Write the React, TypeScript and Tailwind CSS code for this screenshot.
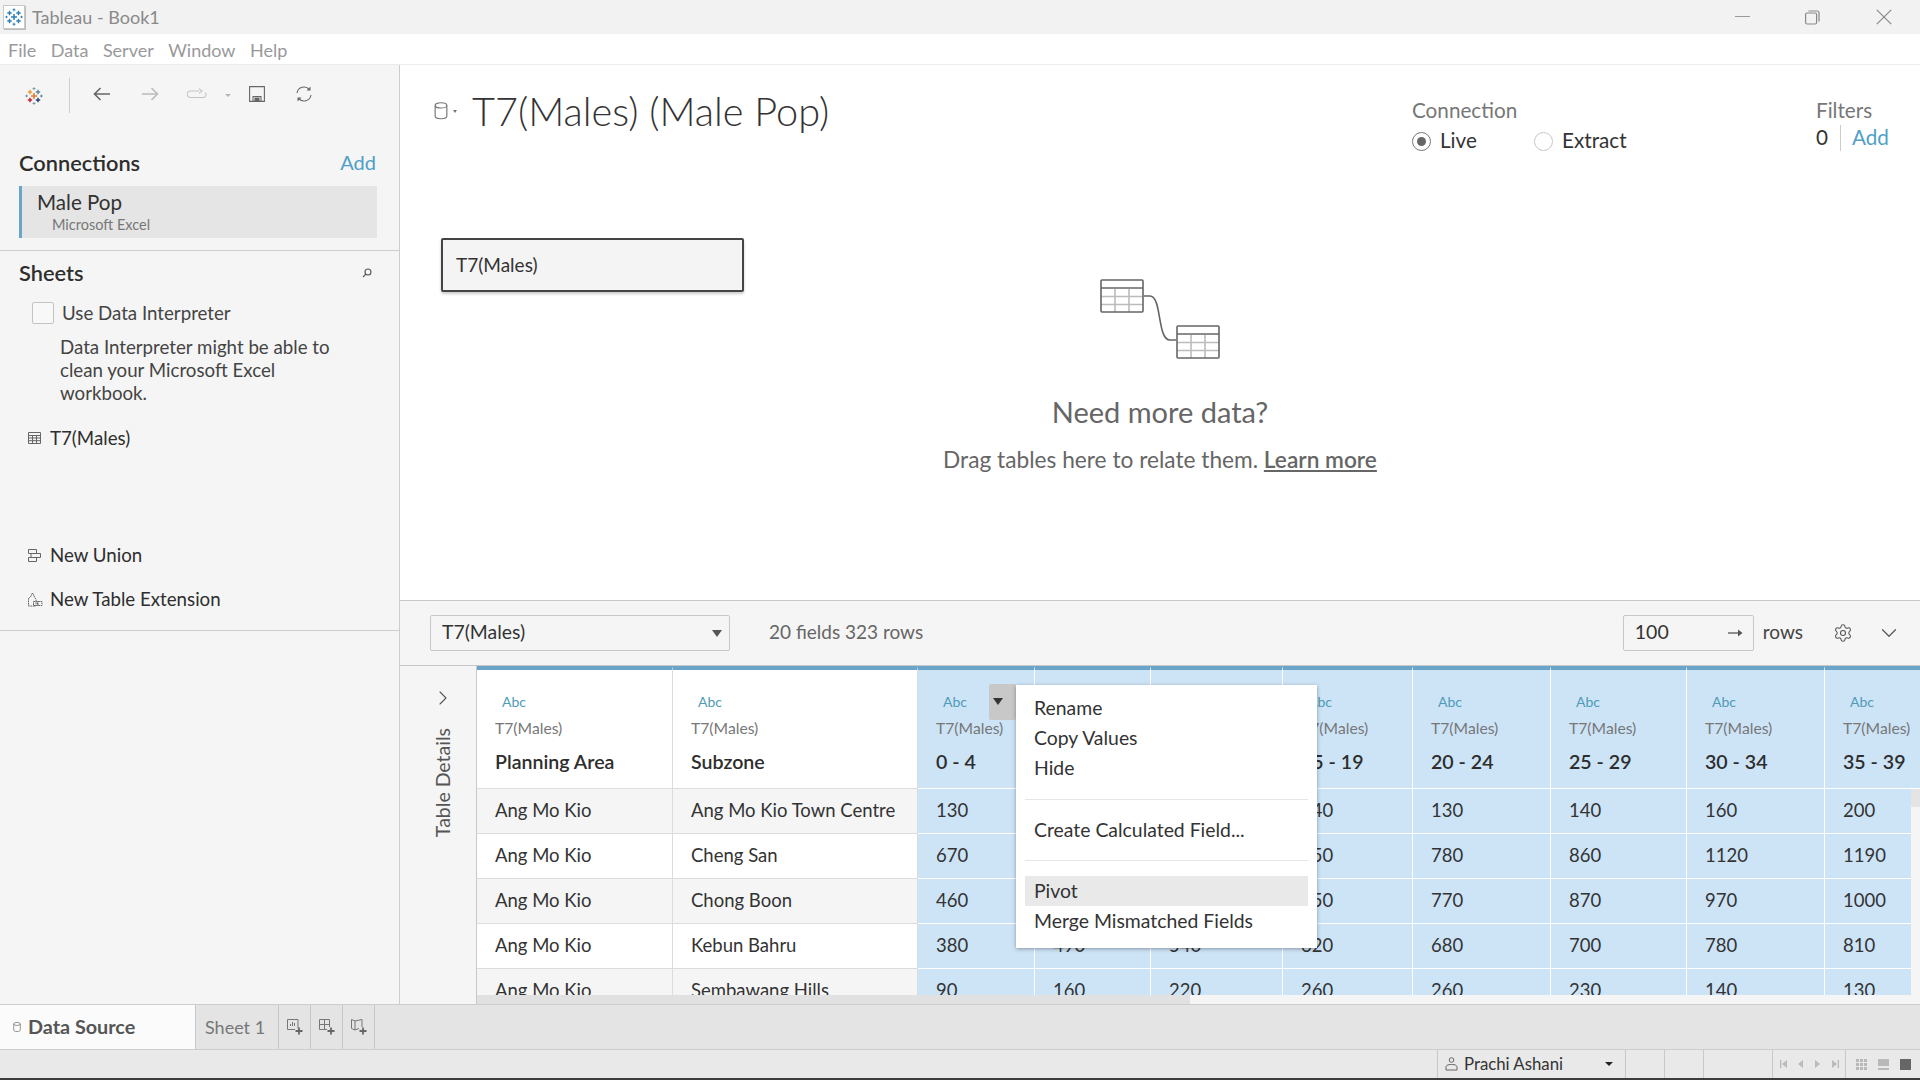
import { ChevronDown, ChevronRight, Settings } from "lucide-react";

const COLS = [
  { w: "w-[196px]", name: "Planning Area", values: ["Ang Mo Kio", "Ang Mo Kio", "Ang Mo Kio", "Ang Mo Kio", "Ang Mo Kio"] },
  { w: "w-[245px]", name: "Subzone", values: ["Ang Mo Kio Town Centre", "Cheng San", "Chong Boon", "Kebun Bahru", "Sembawang Hills"] },
  { w: "w-[117px]", name: "0 - 4", sel: true, menu: true, values: ["130", "670", "460", "380", "90"] },
  { w: "w-[116px]", name: "5 - 9", sel: true, values: ["140", "700", "480", "490", "160"] },
  { w: "w-[132px]", name: "10 - 14", sel: true, values: ["150", "790", "530", "540", "220"] },
  { w: "w-[130px]", name: "15 - 19", sel: true, values: ["140", "850", "650", "620", "260"] },
  { w: "w-[138px]", name: "20 - 24", sel: true, values: ["130", "780", "770", "680", "260"] },
  { w: "w-[136px]", name: "25 - 29", sel: true, values: ["140", "860", "870", "700", "230"] },
  { w: "w-[138px]", name: "30 - 34", sel: true, values: ["160", "1120", "970", "780", "140"] },
  { w: "w-[96px]", name: "35 - 39", sel: true, values: ["200", "1190", "1000", "810", "130"] },
];

function PlusMark({ x, y, r, color, w = 1.4 }: { x: number; y: number; r: number; color: string; w?: number }) {
  return <path d={`M${x - r} ${y}H${x + r}M${x} ${y - r}V${y + r}`} stroke={color} strokeWidth={w} fill="none" />;
}

function TableauLogo() {
  return (
    <svg width="18" height="18" viewBox="0 0 18 18">
      <PlusMark x={9} y={9} r={3} color="#e8762d" w={1.5} />
      <PlusMark x={5} y={5} r={2.2} color="#eb9c3c" />
      <PlusMark x={13} y={5} r={2.2} color="#5b879b" />
      <PlusMark x={5} y={13} r={2.2} color="#c72035" />
      <PlusMark x={13} y={13} r={2.2} color="#1f447c" />
      <PlusMark x={9} y={1.6} r={1.4} color="#7199a6" w={1} />
      <PlusMark x={1.6} y={9} r={1.4} color="#7199a6" w={1} />
      <PlusMark x={16.4} y={9} r={1.4} color="#59879b" w={1} />
      <PlusMark x={9} y={16.4} r={1.4} color="#7199a6" w={1} />
    </svg>
  );
}

function AppIcon() {
  return (
    <div className="flex h-[24px] w-[22px] items-center justify-center border border-[#c9c9c9] bg-white shadow-[1px_1px_0_#bbb]">
      <svg width="18" height="18" viewBox="0 0 18 18">
        <PlusMark x={9} y={9} r={3} color="#2f7fb5" w={1.5} />
        <PlusMark x={4.5} y={5} r={2.2} color="#2f7fb5" />
        <PlusMark x={13.5} y={5} r={2.2} color="#2f7fb5" />
        <PlusMark x={4.5} y={13} r={2.2} color="#2f7fb5" />
        <PlusMark x={13.5} y={13} r={2.2} color="#2f7fb5" />
        <PlusMark x={9} y={1.8} r={1.5} color="#2f7fb5" w={1} />
        <PlusMark x={9} y={16.2} r={1.5} color="#2f7fb5" w={1} />
        <PlusMark x={1.5} y={9} r={1.2} color="#2f7fb5" w={1} />
        <PlusMark x={16.5} y={9} r={1.2} color="#2f7fb5" w={1} />
      </svg>
    </div>
  );
}

function Cylinder({ size = 14, color = "#777" }: { size?: number; color?: string }) {
  return (
    <svg width={size} height={size * 1.25} viewBox="0 0 14 18" fill="none" stroke={color} strokeWidth="1.2">
      <ellipse cx="7" cy="3.5" rx="6" ry="2.7" />
      <path d="M1 3.5V14.5C1 16 3.7 17.2 7 17.2S13 16 13 14.5V3.5" />
    </svg>
  );
}

function MiniTable({ className }: { className?: string }) {
  return (
    <svg width="44" height="34" viewBox="0 0 44 34" fill="none" className={className}>
      <path d="M15 10V33M29 10V33M1 17.5H43M1 25.5H43" stroke="#bcbcbc" strokeWidth="1.6" />
      <rect x="1" y="1" width="42" height="32" rx="1" stroke="#666" strokeWidth="1.6" />
      <path d="M1 9H43" stroke="#666" strokeWidth="1.6" />
    </svg>
  );
}

function SheetList({ icon, label, className }: { icon: React.ReactNode; label: string; className: string }) {
  return (
    <div className={`flex h-[24px] items-center text-[18.7px] text-[#2e2e2e] ${className}`}>
      <span className="flex w-[22px] shrink-0 items-center">{icon}</span>
      <span>{label}</span>
    </div>
  );
}

function Sidebar() {
  return (
    <aside className="flex w-[400px] shrink-0 flex-col border-r border-[#cdcdcd] bg-[#f5f5f5]">
      <div className="mt-[13px] flex h-[35px] items-center">
        <div className="ml-[25px] w-[44px]">
          <TableauLogo />
        </div>
        <div className="h-full w-px bg-[#cfcfcf]" />
        <svg width="18" height="14" viewBox="0 0 18 14" fill="none" stroke="#666" strokeWidth="1.6" className="mb-[3px] ml-[23px]">
          <path d="M17 7H2M7.500 1 1.500 7l6 6" />
        </svg>
        <svg width="18" height="14" viewBox="0 0 18 14" fill="none" stroke="#bbb" strokeWidth="1.6" className="mb-[3px] ml-[30px]">
          <path d="M1 7h15M10.500 1l6 6-6 6" />
        </svg>
        <svg width="20" height="12" viewBox="0 0 20 12" fill="none" stroke="#c4c4c4" strokeWidth="1.1" className="mb-[4px] ml-[28px]">
          <path d="M12 3H3.500a3 3 0 0 0 0 6.500h13a2.600 2.600 0 0 0 1.500-4.700M12 .8 15 3l-3 2.400" />
        </svg>
        <div className="ml-[18px] h-0 w-0 border-x-[3px] border-t-[3px] border-x-transparent border-t-[#b5b5b5]" />
        <svg width="16" height="16" viewBox="0 0 16 16" fill="none" stroke="#666" strokeWidth="1.1" className="mb-[3px] ml-[18px]">
          <path d="M.6.6h14.800v14.800H.6z" />
          <path d="M4 15.400V10.500h8v4.900" />
          <path d="M6 12h4v3.400H6z" fill="#666" />
        </svg>
        <svg width="18" height="18" viewBox="0 0 18 18" fill="none" stroke="#666" strokeWidth="1.1" className="mb-[3px] ml-[30px]">
          <path d="M2 8a7 7 0 0 1 12.400-3.300M16 10a7 7 0 0 1-12.400 3.300" />
          <path d="M15.500 1.500v4h-4zM2.500 16.500v-4h4z" fill="#666" stroke="none" />
        </svg>
      </div>

      <div className="ml-[19px] mr-[23px] mt-[38px] flex h-[24px] items-center justify-between">
        <span className="text-[21.8px] font-semibold text-[#2e2e2e]">Connections</span>
        <span className="mb-[2px] text-[20px] text-[#4f9fc6]">Add</span>
      </div>
      <div className="ml-[19px] mr-[22px] mt-[11px] flex h-[52px] flex-col border-l-[3px] border-[#6aa5c9] bg-[#e5e5e5] pl-[15px] pt-[4px]">
        <span className="text-[20.6px] leading-[24px] text-[#333]">Male Pop</span>
        <span className="ml-[15px] mt-[2px] text-[14.5px] leading-[18px] text-[#777]">Microsoft Excel</span>
      </div>
      <div className="mt-[12px] h-px bg-[#cdcdcd]" />

      <div className="ml-[19px] mr-[27px] mt-[10px] flex h-[24px] items-center justify-between">
        <span className="text-[21.8px] font-semibold text-[#2e2e2e]">Sheets</span>
        <svg width="10" height="10" viewBox="0 0 10 10" fill="none" stroke="#555" strokeWidth="1.1">
          <circle cx="6" cy="4" r="3" />
          <path d="M3.800 6.200 1 9" />
        </svg>
      </div>
      <div className="ml-[32px] mt-[17px] flex h-[22px] items-center">
        <div className="h-[22px] w-[22px] rounded-[2px] border border-[#c4c4c4] bg-[#f8f8f8]" />
        <span className="ml-[8px] text-[18.7px] text-[#444]">Use Data Interpreter</span>
      </div>
      <p className="ml-[60px] mt-[12px] w-[285px] text-[18.7px] leading-[23px] text-[#444]">
        Data Interpreter might be able to clean your Microsoft Excel workbook.
      </p>
      <SheetList
        className="ml-[28px] mt-[21px]"
        label="T7(Males)"
        icon={
          <svg width="13" height="12" viewBox="0 0 13 12" fill="none" stroke="#666" strokeWidth="1">
            <path d="M.5.500h12v11H.500zM.500 3.500h12M.500 6h12M.500 8.700h12M4.500 3.500v8M8.500 3.500v8" />
          </svg>
        }
      />
      <SheetList
        className="ml-[28px] mt-[93px]"
        label="New Union"
        icon={
          <svg width="13" height="13" viewBox="0 0 13 13" fill="none" stroke="#666" strokeWidth="1">
            <path d="M.500.500h8v4h-8zM3 4.500h9.500v4H3zM.500 8.500h8v4h-8z" />
          </svg>
        }
      />
      <SheetList
        className="ml-[28px] mt-[20px]"
        label="New Table Extension"
        icon={
          <svg width="15" height="15" viewBox="0 0 15 15" fill="none" stroke="#666" strokeWidth="1" strokeDasharray="1.800 .7">
            <path d="M.5 6.500 2.500 5 4.500.8 6.500 5 8 7.500V14H.5z" />
            <path d="M5.500 9.500h4v4h-4zM10 9.500h4v4h-4z" />
          </svg>
        }
      />
      <div className="mt-[19px] h-px bg-[#cdcdcd]" />
    </aside>
  );
}

function UpperPanel() {
  return (
    <section className="h-[536px] shrink-0 border-b border-[#c8c8c8] bg-white">
      <div className="flex pt-[24px]">
        <div className="ml-[34px] flex h-[44px] w-[38px] items-center">
          <Cylinder />
          <div className="ml-[5px] h-0 w-0 border-x-[2.500px] border-t-[3px] border-x-transparent border-t-[#777]" />
        </div>
        <h1 className="text-[39.700px] font-light leading-[44px] text-[#333]">T7(Males) (Male Pop)</h1>
        <div className="ml-auto mt-[9px] w-[404px]">
          <div className="h-[24px] text-[20.7px] leading-[24px] text-[#777]">Connection</div>
          <div className="mt-[7px] flex h-[24px] items-center text-[20.7px] text-[#333]">
            <div className="flex h-[19px] w-[19px] items-center justify-center rounded-full border border-[#777] bg-white">
              <div className="h-[9px] w-[9px] rounded-full bg-[#666]" />
            </div>
            <span className="ml-[9px] w-[94px]">Live</span>
            <div className="h-[19px] w-[19px] rounded-full border border-[#c8c8c8] bg-white" />
            <span className="ml-[9px]">Extract</span>
          </div>
        </div>
        <div className="mt-[9px] w-[104px]">
          <div className="h-[24px] text-[20.7px] leading-[24px] text-[#777]">Filters</div>
          <div className="mt-[3px] flex h-[26px] items-center text-[20.7px]">
            <span className="w-[24px] text-[#333]">0</span>
            <div className="h-[26px] w-px bg-[#ccc]" />
            <span className="ml-[11px] text-[#4f9fc6]">Add</span>
          </div>
        </div>
      </div>
      <div className="grid grid-cols-[1fr_auto_1fr]">
        <div className="pl-[41px] pt-[85px]">
          <div className="flex h-[54px] w-[303px] items-center rounded-[2px] border-2 border-[#444] bg-[#f4f4f4] pl-[13px] text-[19px] text-[#333] shadow-[0_2px_3px_rgba(0,0,0,0.2)]">
            T7(Males)
          </div>
        </div>
        <div className="flex flex-col items-center pt-[126px]">
          <div className="flex">
            <MiniTable />
            <svg width="32" height="46" viewBox="0 0 32 46" fill="none" stroke="#666" strokeWidth="1.6" className="mt-[16px]">
              <path d="M0 1h6c12 0 7 44 20 44h6" />
            </svg>
            <MiniTable className="mt-[46px]" />
          </div>
          <div className="mt-[36px] text-[29px] leading-[34px] text-[#666]">Need more data?</div>
          <div className="mt-[17px] text-[22.7px] leading-[28px] text-[#666]">
            Drag tables here to relate them. <span className="font-semibold underline">Learn more</span>
          </div>
        </div>
      </div>
    </section>
  );
}

function TableToolbar() {
  return (
    <div className="flex h-[65px] shrink-0 items-center border-b border-[#c8c8c8] bg-[#f5f5f5] pl-[30px]">
      <div className="flex h-[36px] w-[300px] items-center justify-between rounded-[2px] border border-[#c8c8c8] pl-[11px] pr-[7px] text-[19.4px] text-[#333]">
        <span className="mb-[2px]">T7(Males)</span>
        <div className="h-0 w-0 border-x-[5.500px] border-t-[7px] border-x-transparent border-t-[#555]" />
      </div>
      <span className="mb-[2px] ml-[39px] text-[19px] text-[#666]">20 fields 323 rows</span>
      <div className="ml-auto flex h-[36px] w-[131px] items-center justify-between rounded-[2px] border border-[#c8c8c8] pl-[11px] pr-[10px] text-[19.5px] text-[#333]">
        <span className="mb-[2px]">100</span>
        <svg width="15" height="10" viewBox="0 0 15 10" fill="none" stroke="#555" strokeWidth="1.300">
          <path d="M0 5h13" />
          <path d="m10 1.500 4.500 3.500L10 8.500z" fill="#555" stroke="none" />
        </svg>
      </div>
      <span className="mb-[2px] ml-[9px] text-[19px] text-[#444]">rows</span>
      <Settings size={20} strokeWidth={1.300} className="ml-[30px] text-[#555]" />
      <ChevronDown size={26} strokeWidth={1.100} className="ml-[23px] mr-[18px] text-[#555]" />
    </div>
  );
}

function ColumnMenu() {
  return (
    <div className="absolute left-[539px] top-[19px] z-20 flex h-[263px] w-[301px] flex-col bg-white px-[9px] pt-[8px] text-[19.4px] text-[#333] shadow-[0_1px_4px_rgba(0,0,0,0.35)]">
      <div className="flex h-[30px] items-center pl-[9px]">Rename</div>
      <div className="flex h-[30px] items-center pl-[9px]">Copy Values</div>
      <div className="flex h-[30px] items-center pl-[9px]">Hide</div>
      <div className="mt-[16px] h-px bg-[#e6e6e6]" />
      <div className="mt-[15px] flex h-[30px] items-center pl-[9px]">Create Calculated Field...</div>
      <div className="mt-[15px] h-px bg-[#e6e6e6]" />
      <div className="mt-[15px] flex h-[30px] items-center bg-[#e9e9e9] pl-[9px]">Pivot</div>
      <div className="flex h-[30px] items-center pl-[9px]">Merge Mismatched Fields</div>
    </div>
  );
}

function Column({ col }: { col: (typeof COLS)[number] }) {
  const sep = col.sel ? "border-white" : "border-[#dcdcdc]";
  return (
    <div className={`relative shrink-0 ${col.w} ${col.sel ? "bg-[#cde4f7]" : "bg-white"}`}>
      <div className={`flex h-[123px] flex-col border-b border-r border-t-4 border-t-[#6aa5c9] pl-[18px] pt-[23px] ${sep}`}>
        <span className="ml-[7px] text-[14px] leading-[18px] text-[#4f9bb8]">Abc</span>
        <span className="mt-[7px] text-[15.7px] leading-[20px] text-[#777]">T7(Males)</span>
        <span className="mt-[12px] text-[19.600px] font-semibold leading-[24px] text-[#2e2e2e]">{col.name}</span>
      </div>
      {col.menu && (
        <div className="absolute left-[71px] top-[18px] flex h-[36px] w-[27px] items-start rounded-[2px] bg-[#c8c8c8] pl-[4px] pt-[14px]">
          <div className="h-0 w-0 border-x-[5.500px] border-t-[7px] border-x-transparent border-t-[#333]" />
        </div>
      )}
      {col.values.map((v, i) => (
        <div
          key={i}
          className={`flex h-[45px] items-center border-b border-r pl-[18px] text-[18.5px] text-[#333] ${sep} ${
            !col.sel && i % 2 === 0 ? "bg-[#f5f5f5]" : ""
          }`}
        >
          {v}
        </div>
      ))}
    </div>
  );
}

function DataGrid() {
  return (
    <div className="flex min-h-0 flex-1">
      <div className="flex w-[77px] shrink-0 flex-col items-center border-r border-[#c8c8c8] bg-[#f5f5f5] pl-[9px] pt-[20px]">
        <ChevronRight size={24} strokeWidth={1.100} className="text-[#555]" />
        <span className="mt-[18px] rotate-180 text-[19.500px] text-[#555] [writing-mode:vertical-rl]">Table Details</span>
      </div>
      <div className="relative flex-1 overflow-hidden">
        <div className="flex">
          {COLS.map((col) => (
            <Column key={col.name} col={col} />
          ))}
        </div>
        <ColumnMenu />
        <div className="absolute right-0 top-[123px] bottom-0 w-[9px] bg-[#f5f5f5]">
          <div className="h-[18px] bg-[#e4e4e4]" />
        </div>
        <div className="absolute inset-x-0 bottom-0 h-[9px] bg-[#f5f5f5]">
          <div className="h-full w-[713px] bg-[#e1e1e1]" />
        </div>
      </div>
    </div>
  );
}

function SheetAdd({ kind }: { kind: "sheet" | "dash" | "story" }) {
  return (
    <div className="flex h-full w-[32px] items-center justify-center border-r border-[#c8c8c8]">
      <svg width="16" height="16" viewBox="0 0 16 16" fill="none" stroke="#777" strokeWidth="1">
        {kind === "sheet" && <path d="M11 9.500V.500H.500v10H8M3.500 7V5M5.500 7V3M7.500 7V4" />}
        {kind === "dash" && <path d="M8 10.500H.500V.500h10V8M.500 5.500h10M5.500.500v10" />}
        {kind === "story" && <path d="M8 9.500 4 11V2L.500.500v9L4 11M4 2l7-1.500V8" />}
        <path d="M12 8.500v7M8.500 12h7" stroke="#666" strokeWidth="1.800" />
      </svg>
    </div>
  );
}

function TabBar() {
  return (
    <div className="flex h-[46px] shrink-0 border-y border-[#cdcdcd] bg-[#e4e4e4]">
      <div className="flex w-[196px] items-center border-r border-[#c8c8c8] bg-[#fbfbfb] pl-[13px]">
        <Cylinder size={8} color="#666" />
        <span className="ml-[7px] text-[19.8px] font-bold text-[#555]">Data Source</span>
      </div>
      <div className="flex w-[83px] items-center border-r border-[#c8c8c8] pl-[9px] text-[18px] text-[#777]">Sheet 1</div>
      <SheetAdd kind="sheet" />
      <SheetAdd kind="dash" />
      <SheetAdd kind="story" />
    </div>
  );
}

function StatusBar() {
  const seg = "flex h-full items-center border-l border-[#c8c8c8]";
  return (
    <div className="flex h-[28px] shrink-0 justify-end bg-[#e9e9e9]">
      <div className={`${seg} w-[188px] pl-[7px]`}>
        <svg width="13" height="14" viewBox="0 0 13 14" fill="none" stroke="#666" strokeWidth="1">
          <circle cx="6.500" cy="3" r="2.300" />
          <path d="M1 13V10c0-1.500 1.500-2.500 5.500-2.500S12 8.500 12 10v3z" />
        </svg>
        <span className="ml-[6px] w-[141px] text-[16.8px] text-[#333]">Prachi Ashani</span>
        <div className="h-0 w-0 border-x-[4px] border-t-[4px] border-x-transparent border-t-[#222]" />
      </div>
      <div className={`${seg} w-[39px]`} />
      <div className={`${seg} w-[39px]`} />
      <div className={`${seg} w-[69px]`} />
      <div className={`${seg} w-[73px] justify-center gap-[9px]`}>
        <svg width="7" height="8" viewBox="0 0 7 8" fill="#bbb"><path d="M0 0h1.300v8H0zM7 0v8L2 4z" /></svg>
        <svg width="5" height="8" viewBox="0 0 5 8" fill="#bbb" className="ml-[2px]"><path d="M5 0v8L0 4z" /></svg>
        <svg width="5" height="8" viewBox="0 0 5 8" fill="#bbb" className="ml-[3px]"><path d="M0 0v8l5-4z" /></svg>
        <svg width="7" height="8" viewBox="0 0 7 8" fill="#bbb" className="ml-[3px]"><path d="M5.700 0H7v8H5.700zM0 0v8l5-4z" /></svg>
      </div>
      <div className={`${seg} w-[75px] pl-[10px]`}>
        <div className="grid h-[11px] w-[11px] grid-cols-3 gap-px">
          {Array.from({ length: 9 }).map((_, i) => (
            <div key={i} className="bg-[#b9b9b9]" />
          ))}
        </div>
        <div className="ml-[11px] flex h-[11px] w-[11px] flex-col justify-between">
          <div className="h-[7px] bg-[#b9b9b9]" />
          <div className="h-[2px] bg-[#b9b9b9]" />
        </div>
        <div className="ml-[11px] h-[11px] w-[11px] bg-[#666]" />
      </div>
    </div>
  );
}

export default function App() {
  return (
    <div className="flex h-[1080px] w-[1920px] flex-col overflow-hidden bg-white font-['Lato',sans-serif]">
      <header className="flex h-[34px] shrink-0 items-center bg-[#f2f2f2] pl-[3px]">
        <AppIcon />
        <span className="ml-[7px] text-[18px] text-[#8a8a8a]">Tableau - Book1</span>
        <svg width="16" height="2" viewBox="0 0 16 2" className="ml-auto" fill="#999"><path d="M0 0h15v1H0z" /></svg>
        <svg width="15" height="15" viewBox="0 0 15 15" fill="none" stroke="#888" strokeWidth="1.200" className="ml-[54px]">
          <rect x=".6" y="3" width="11" height="11" rx="1.500" />
          <path d="M3.500 1h8.500a2 2 0 0 1 2 2v8.500" />
        </svg>
        <svg width="16" height="16" viewBox="0 0 16 16" fill="none" stroke="#888" strokeWidth="1.200" className="ml-[56px] mr-[28px]">
          <path d="m.8.800 14.400 14.400M15.200.800.800 15.200" />
        </svg>
      </header>
      <nav className="flex h-[31px] shrink-0 items-center gap-[14.500px] border-b border-[#ececec] bg-white pl-[8px] pt-[3px] text-[18px] text-[#999]">
        <span>File</span>
        <span>Data</span>
        <span>Server</span>
        <span>Window</span>
        <span>Help</span>
      </nav>
      <div className="flex min-h-0 flex-1">
        <Sidebar />
        <main className="flex min-w-0 flex-1 flex-col">
          <UpperPanel />
          <TableToolbar />
          <DataGrid />
        </main>
      </div>
      <TabBar />
      <StatusBar />
      <div className="h-[2px] shrink-0 bg-[#3c3c3c]" />
    </div>
  );
}
